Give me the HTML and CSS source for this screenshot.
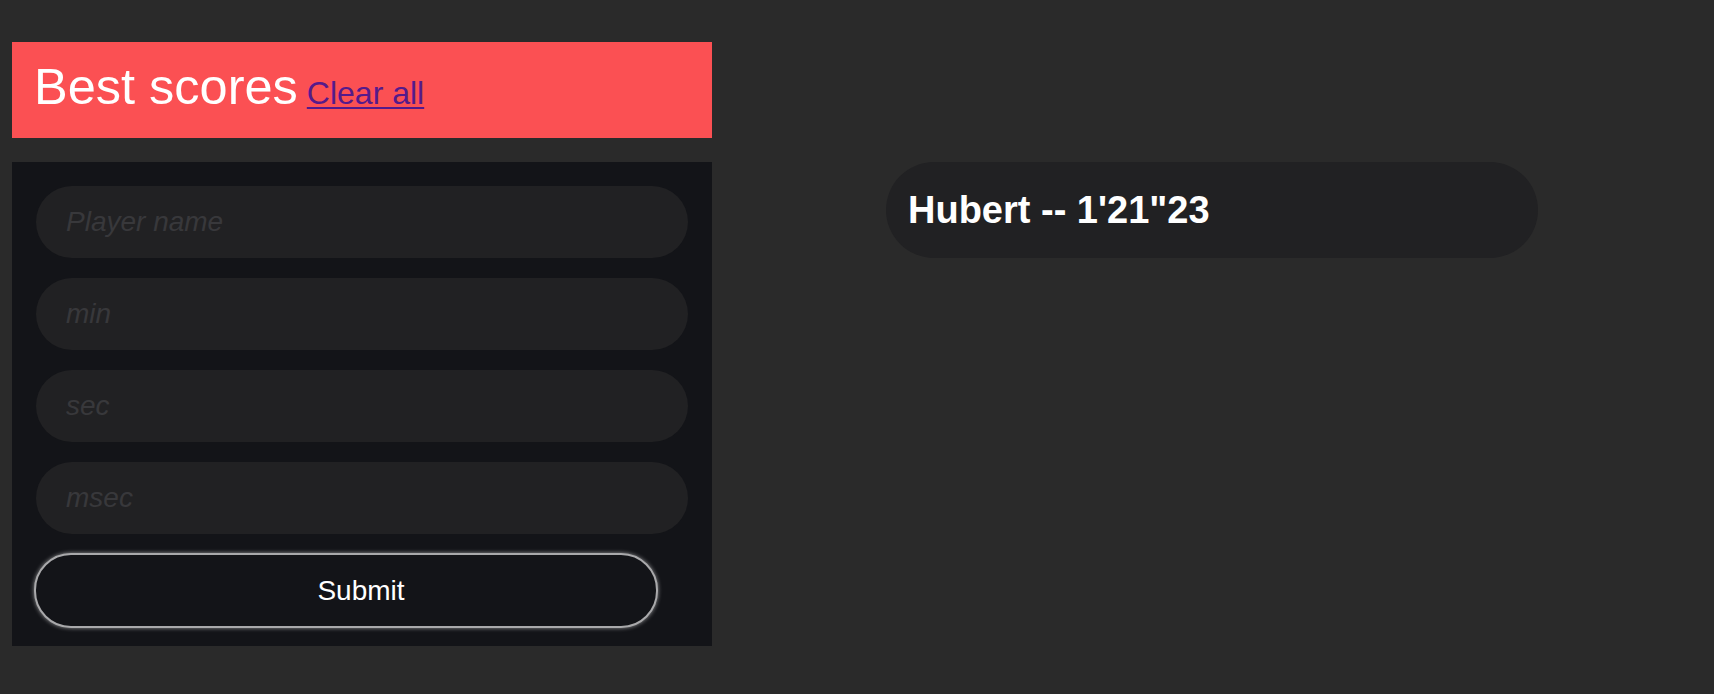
FILE: index.html
```html
<!DOCTYPE html>
<html lang="en">
<head>
<meta charset="utf-8">
<title>Best scores</title>
<link rel="stylesheet" href="styles.css">
</head>
<body>
<div class="page">
  <div class="left">
    <header class="head">
      <h1 class="title">Best scores</h1>
      <a class="clear" href="#">Clear all</a>
    </header>
    <form class="panel">
      <input class="field" type="text" placeholder="Player name">
      <input class="field" type="text" placeholder="min">
      <input class="field" type="text" placeholder="sec">
      <input class="field" type="text" placeholder="msec">
      <button class="submit" type="button">Submit</button>
    </form>
  </div>
  <div class="right">
    <div class="score">Hubert -- 1'21"23</div>
  </div>
</div>
</body>
</html>
```
FILE: styles.css
```css
html, body {
  margin: 0;
  padding: 0;
  background: #2a2a2a;
  font-family: "Liberation Sans", Arial, sans-serif;
}
.page {
  display: flex;
  align-items: flex-start;
  padding: 42px 12px;
}
.left {
  width: 700px;
  display: flex;
  flex-direction: column;
  gap: 24px;
}
.head {
  box-sizing: border-box;
  height: 96px;
  background: #fb5053;
  display: flex;
  align-items: baseline;
  padding: 19.5px 22px 0;
}
.title {
  margin: 0;
  font-size: 50.5px;
  line-height: 1;
  font-weight: 400;
  color: #ffffff;
}
.clear {
  margin-left: 9px;
  font-size: 32px;
  line-height: 1;
  color: #551a8b;
  text-decoration: underline;
  text-decoration-thickness: 2px;
  text-underline-offset: 3px;
}
.panel {
  margin: 0;
  background: #131418;
  padding: 24px 24px 18px;
  display: flex;
  flex-direction: column;
  gap: 20px;
}
.field {
  box-sizing: border-box;
  width: 652px;
  height: 72px;
  border: none;
  outline: none;
  border-radius: 36px;
  background: #212123;
  padding: 0 30px;
  font-family: "Liberation Sans", Arial, sans-serif;
  font-size: 28px;
  font-style: italic;
  color: #dddddd;
}
.field::placeholder {
  color: #38383b;
  font-style: italic;
}
.submit {
  box-sizing: border-box;
  width: 624px;
  height: 75px;
  margin: -1px 0 0 -2px;
  border: 2px solid #a9a9ab;
  border-radius: 37px;
  background: #131418;
  box-shadow: 0 0 4px rgba(255, 255, 255, 0.55);
  color: #ffffff;
  font-family: "Liberation Sans", Arial, sans-serif;
  font-size: 28px;
  padding: 0 0 0 30px;
  cursor: pointer;
}
.right {
  margin-left: 174px;
  padding-top: 120px;
}
.score {
  box-sizing: border-box;
  width: 652px;
  height: 96px;
  border-radius: 48px;
  background: #212123;
  display: flex;
  align-items: center;
  padding-left: 22px;
  color: #ffffff;
  font-size: 38px;
  font-weight: 700;
}
```
